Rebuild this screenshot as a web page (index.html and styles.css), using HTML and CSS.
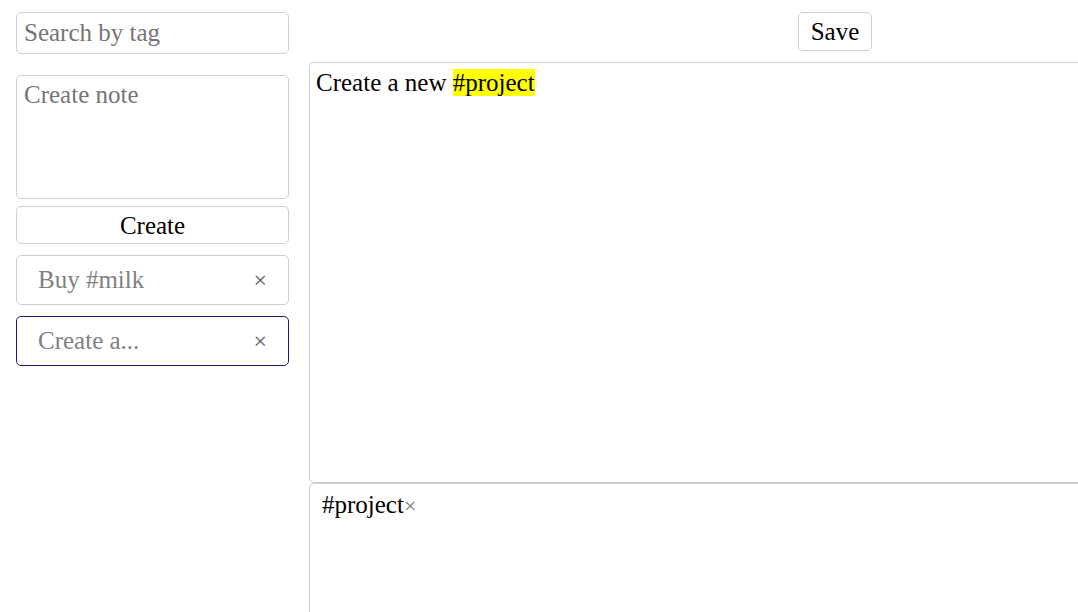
FILE: index.html
```html
<!DOCTYPE html>
<html>
<head>
<meta charset="utf-8">
<link rel="stylesheet" href="styles.css">
</head>
<body>
<div class="app">
  <aside class="sidebar">
    <input class="search" type="text" placeholder="Search by tag">
    <textarea class="new-note" placeholder="Create note"></textarea>
    <button class="create-btn">Create</button>
    <div class="note">
      <span class="note-text">Buy #milk</span>
      <span class="note-close">×</span>
    </div>
    <div class="note note-active">
      <span class="note-text">Create a...</span>
      <span class="note-close">×</span>
    </div>
  </aside>
  <main class="main">
    <div class="toolbar">
      <button class="save-btn">Save</button>
    </div>
    <div class="editor">Create a new <mark class="tag-mark">#project</mark></div>
    <div class="tags">
      <span class="tag">#project<span class="tag-close">×</span></span>
    </div>
  </main>
</div>
</body>
</html>
```

FILE: styles.css
```css
html, body {
  margin: 0;
  padding: 0;
  background: #fff;
  overflow: hidden;
}
body {
  font-family: "Liberation Serif", "Times New Roman", serif;
  font-size: 25px;
  color: #000;
}
.app {
  display: flex;
  gap: 20px;
  padding-left: 16px;
  width: 1400px;
}
.sidebar {
  width: 273px;
  flex: none;
  display: flex;
  flex-direction: column;
  padding-top: 12px;
}
.search, .new-note, .create-btn, .note, .save-btn {
  font-family: "Liberation Serif", "Times New Roman", serif;
  font-size: 25px;
  box-sizing: border-box;
  border: 1px solid #cfcfcf;
  border-radius: 5px;
  background: #fff;
  outline: none;
}
.search {
  height: 42px;
  width: 100%;
  padding: 0 7px;
  margin: 0;
}
.search::placeholder, .new-note::placeholder {
  color: #757575;
}
.new-note {
  margin-top: 21px;
  height: 124px;
  width: 100%;
  padding: 5px 7px;
  resize: none;
  display: block;
}
.create-btn {
  margin-top: 7px;
  height: 38px;
  width: 100%;
  padding: 2px 0 0;
  color: #000;
}
.note {
  margin-top: 11px;
  height: 50px;
  display: flex;
  align-items: center;
  justify-content: space-between;
  padding: 0 21px 0 21px;
  color: #808080;
}
.note-active {
  border-color: #1c1c78;
}
.note-close {
  font-family: "Liberation Serif", serif;
  font-size: 24px;
  color: #555;
}
.main {
  width: 1052px;
  flex: none;
  display: flex;
  flex-direction: column;
  padding-top: 12px;
}
.toolbar {
  display: flex;
  justify-content: center;
  height: 39px;
}
.save-btn {
  width: 74px;
  height: 39px;
  padding: 0;
  color: #000;
}
.editor {
  margin-top: 11px;
  height: 421px;
  box-sizing: border-box;
  border: 1px solid #cfcfcf;
  border-radius: 5px;
  padding: 6px 6px;
}
.tag-mark {
  background: #ffff00;
  color: #000;
}
.tags {
  height: 300px;
  box-sizing: border-box;
  border: 1px solid #cfcfcf;
  border-radius: 5px;
  padding: 7px 12px;
}
.tag-close {
  font-family: "Liberation Serif", serif;
  font-size: 22px;
  color: #777;
}
```
